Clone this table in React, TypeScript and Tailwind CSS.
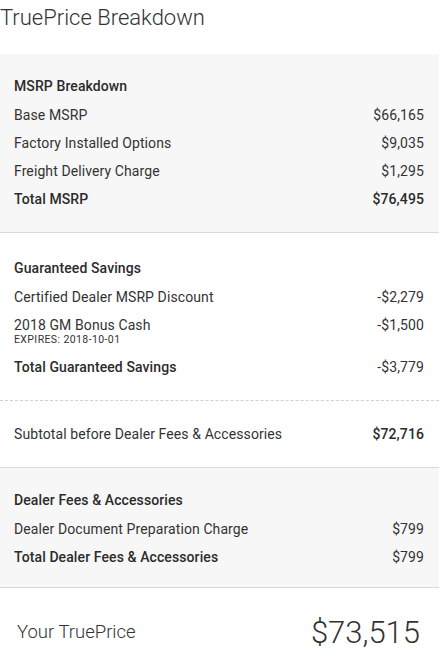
import React from "react";

type Line = { label: string; value: string; bold?: boolean; strong?: boolean; note?: string };

const Row = ({ label, value, bold, strong, note }: Line) => (
  <div className="flex justify-between text-[#333]">
    <div>
      <p className={`leading-[28px] ${bold ? "font-medium text-[#2b2b2b]" : ""}`}>{label}</p>
      {note && (
        <p className="text-[10.5px] leading-[10px] -mt-[4px] mb-[8px] tracking-[0.4px]">{note}</p>
      )}
    </div>
    <p className={`leading-[28px] ${strong ? "font-medium text-[#2b2b2b]" : ""}`}>{value}</p>
  </div>
);

const Section = ({
  title,
  rows,
  className,
}: {
  title: string;
  rows: Line[];
  className: string;
}) => (
  <div className={className}>
    <p className="leading-[30px] font-medium text-[#2b2b2b]">{title}</p>
    {rows.map((r) => (
      <Row key={r.label} {...r} />
    ))}
  </div>
);

export default function App() {
  return (
    <div
      className="w-[439px] bg-white text-[14px] tracking-[0.1px]"
      style={{ fontFamily: "Roboto, 'Liberation Sans', sans-serif" }}
    >
      <h1 className="text-[22px] font-light text-[#333] leading-[36px] pb-[18px] tracking-normal">
        TruePrice Breakdown
      </h1>

      <Section
        className="bg-[#f7f7f7] pl-[14px] pr-[15px] pt-[17px] pb-[19px] border-b border-[#d9d9d9]"
        title="MSRP Breakdown"
        rows={[
          { label: "Base MSRP", value: "$66,165" },
          { label: "Factory Installed Options", value: "$9,035" },
          { label: "Freight Delivery Charge", value: "$1,295" },
          { label: "Total MSRP", value: "$76,495", bold: true, strong: true },
        ]}
      />

      <Section
        className="pl-[14px] pr-[15px] pt-[20px] pb-[19px] border-b border-dashed border-[#d0d0d0]"
        title="Guaranteed Savings"
        rows={[
          { label: "Certified Dealer MSRP Discount", value: "-$2,279" },
          { label: "2018 GM Bonus Cash", value: "-$1,500", note: "EXPIRES: 2018-10-01" },
          { label: "Total Guaranteed Savings", value: "-$3,779", bold: true },
        ]}
      />

      <div className="pl-[14px] pr-[15px] pt-[19px] pb-[19px] border-b border-[#d9d9d9]">
        <div className="flex justify-between text-[#333] leading-[28px]">
          <p>Subtotal before Dealer Fees &amp; Accessories</p>
          <p className="font-medium text-[#2b2b2b]">$72,716</p>
        </div>
      </div>

      <Section
        className="bg-[#f7f7f7] pl-[14px] pr-[15px] pt-[17px] pb-[16px] border-b border-[#d9d9d9]"
        title="Dealer Fees & Accessories"
        rows={[
          { label: "Dealer Document Preparation Charge", value: "$799" },
          { label: "Total Dealer Fees & Accessories", value: "$799", bold: true },
        ]}
      />

      <div className="flex justify-between items-center pl-[17px] pr-[19px] pt-[22px] tracking-normal">
        <p className="text-[18.5px] font-light text-[#333]">Your TruePrice</p>
        <p className="text-[31px] font-light text-[#333]">$73,515</p>
      </div>
    </div>
  );
}
